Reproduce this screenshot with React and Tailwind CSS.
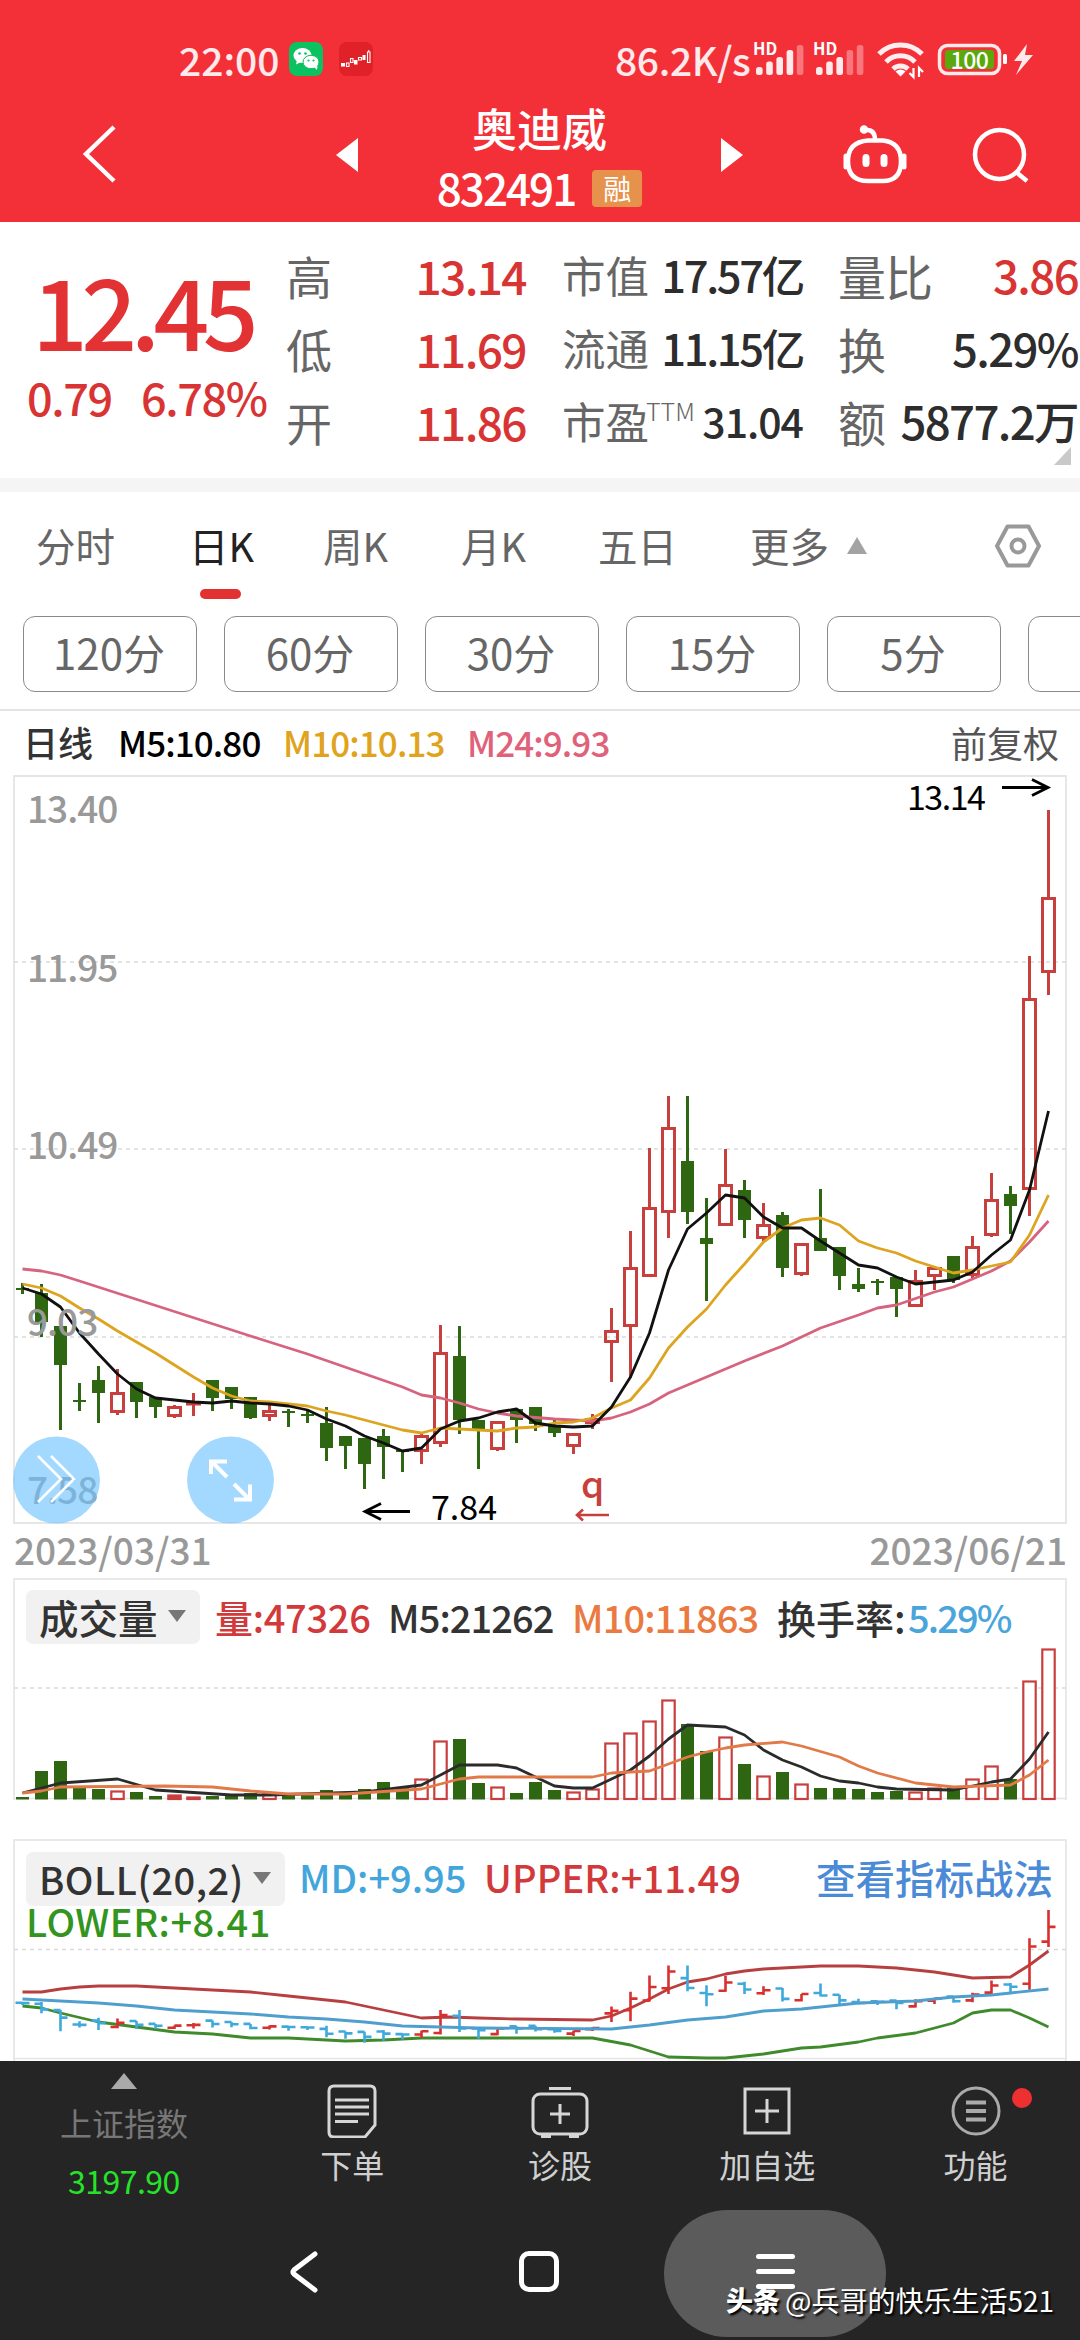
import React from 'react';

const CJK = 'font-["Noto_Sans_CJK_SC",sans-serif]';

const RED = '#c8403e';
const GREEN = '#2f6612';

// direction, high, low, body top, body bottom (chart units, top down)
const CANDLES = [
    ['d', 1283, 1294, 1288, 1290], ['d', 1284, 1337, 1293, 1322], ['d', 1326, 1430, 1326, 1365], ['d', 1383, 1411, 1400, 1402],
    ['d', 1366, 1423, 1380, 1393], ['u', 1369, 1415, 1392, 1413], ['d', 1382, 1418, 1382, 1402], ['d', 1397, 1418, 1397, 1407],
    ['u', 1405, 1418, 1406, 1417], ['u', 1393, 1416, 1402, 1404], ['d', 1380, 1411, 1380, 1398], ['d', 1387, 1409, 1387, 1399],
    ['d', 1397, 1419, 1397, 1418], ['u', 1405, 1421, 1410, 1417], ['d', 1409, 1427, 1411, 1413], ['d', 1410, 1423, 1414, 1416],
    ['d', 1407, 1461, 1423, 1448], ['d', 1436, 1469, 1436, 1446], ['d', 1438, 1489, 1438, 1464], ['d', 1429, 1479, 1436, 1447],
    ['d', 1450, 1472, 1450, 1452], ['u', 1433, 1464, 1435, 1452], ['u', 1325, 1447, 1352, 1444], ['d', 1326, 1434, 1356, 1420],
    ['d', 1420, 1469, 1420, 1430], ['u', 1421, 1451, 1421, 1450], ['d', 1409, 1443, 1409, 1420], ['d', 1407, 1431, 1407, 1424],
    ['d', 1420, 1437, 1425, 1433], ['u', 1433, 1454, 1433, 1447], ['u', 1414, 1429, 1418, 1424], ['u', 1308, 1382, 1330, 1343],
    ['u', 1231, 1378, 1267, 1327], ['u', 1148, 1277, 1207, 1277], ['u', 1096, 1238, 1127, 1213], ['d', 1096, 1224, 1161, 1212],
    ['d', 1198, 1301, 1238, 1244], ['u', 1149, 1226, 1184, 1226], ['d', 1180, 1238, 1190, 1220], ['u', 1203, 1243, 1224, 1239],
    ['d', 1212, 1277, 1215, 1268], ['u', 1243, 1276, 1243, 1275], ['d', 1189, 1251, 1238, 1251], ['d', 1247, 1290, 1247, 1276],
    ['d', 1268, 1292, 1284, 1289], ['d', 1279, 1295, 1281, 1283], ['d', 1277, 1317, 1277, 1289], ['u', 1270, 1307, 1280, 1307],
    ['u', 1266, 1290, 1267, 1277], ['d', 1256, 1283, 1256, 1280], ['u', 1236, 1280, 1246, 1276], ['u', 1173, 1237, 1199, 1236],
    ['d', 1186, 1234, 1194, 1206], ['u', 956, 1216, 998, 1190], ['u', 810, 995, 897, 973],
];

const VOLUME = [
    1797, 1771, 1761, 1788, 1789, 1791, 1792, 1796, 1795, 1797, 1796, 1795, 1793, 1793, 1793, 1795, 1790, 1792, 1789,
    1782, 1788, 1779, 1741, 1739, 1783, 1787, 1793, 1782, 1790, 1792, 1789, 1743, 1733, 1721, 1700, 1724, 1751, 1737,
    1764, 1776, 1772, 1784, 1788, 1788, 1789, 1792, 1791, 1792, 1788, 1788, 1779, 1766, 1779, 1681, 1649,
];

const MA5 = [
    1288, 1294, 1307, 1333, 1354, 1374, 1389, 1398, 1400, 1402, 1403, 1401, 1403, 1404, 1406, 1410, 1419, 1426, 1436,
    1443, 1451, 1448, 1429, 1421, 1418, 1412, 1409, 1423, 1426, 1427, 1426, 1407, 1377, 1333, 1270, 1229, 1213, 1195,
    1198, 1217, 1228, 1228, 1241, 1253, 1265, 1268, 1277, 1284, 1282, 1280, 1272, 1255, 1240, 1190, 1111,
].map((y, i) => [i, y]);

const MA10 = [
    1284, 1288, 1296, 1308, 1319, 1331, 1342, 1353, 1365, 1377, 1388, 1396, 1401, 1402, 1404, 1406, 1411, 1415, 1420,
    1425, 1430, 1433, 1428, 1429, 1430, 1431, 1428, 1427, 1423, 1422, 1418, 1408, 1400, 1378, 1348, 1327, 1309, 1285,
    1264, 1242, 1228, 1220, 1218, 1225, 1241, 1248, 1253, 1261, 1267, 1273, 1270, 1266, 1262, 1235, 1195,
].map((y, i) => [i, y]);

const MA24 = [
    [0, 1269], [1, 1271], [2, 1275], [3, 1281], [12, 1336], [15, 1354], [20, 1387], [21, 1395], [22, 1398], [23, 1403],
    [24, 1409], [25, 1413], [26, 1416], [28, 1419], [30, 1421], [31, 1418], [32, 1412], [33, 1404], [34, 1393], [36, 1377],
    [38, 1361], [40, 1346], [42, 1328], [44, 1315], [45, 1308], [46, 1305], [48, 1292], [49, 1287], [50, 1279], [51, 1271],
    [52, 1261], [53, 1242], [54, 1221],
];

const VOL_MA5 = [
    [0, 1793], [1, 1788], [2, 1783], [5, 1779], [7, 1790], [11, 1795], [13, 1795], [18, 1792], [21, 1785], [23, 1765],
    [25, 1765], [26, 1768], [28, 1786], [29, 1788], [30, 1788], [31, 1779], [32, 1770], [33, 1756], [34, 1739], [35, 1725],
    [37, 1727], [38, 1735], [39, 1750], [40, 1760], [41, 1767], [42, 1776], [43, 1781], [44, 1783], [45, 1787], [46, 1789],
    [49, 1790], [51, 1782], [52, 1779], [53, 1759], [54, 1732],
];

const VOL_MA10 = [
    [0, 1793], [1, 1791], [2, 1787], [7.5, 1786], [10, 1787], [12, 1791], [14, 1794], [17, 1794], [21, 1789], [22, 1784],
    [23, 1779], [24, 1777], [30, 1777], [31, 1773], [33, 1771], [34, 1764], [35, 1757], [36, 1752], [37, 1748], [38, 1745],
    [40, 1742], [41, 1746], [43, 1757], [44, 1766], [45, 1773], [47, 1783], [49, 1787], [52, 1785], [53, 1775], [54, 1760],
];

const UPPER = [
    [0, 1992], [1, 1992], [2, 1989], [3, 1987], [4, 1986], [6, 1986], [8, 1988], [12, 1992], [14, 1996], [17, 2002],
    [19, 2010], [21, 2018], [22.5, 2017], [24, 2018], [26, 2019], [30, 2020], [31, 2016], [32, 2008], [33, 1999], [34, 1989],
    [35, 1982], [36, 1979], [37, 1974], [38, 1971], [39, 1969], [42, 1966], [44, 1966], [46, 1968], [48, 1972], [50, 1978],
    [52, 1977], [53, 1965], [54, 1951],
];

const MIDDLE = [
    [0, 1999], [2, 2001], [4, 2003], [6, 2006], [8, 2010], [10, 2012], [12, 2014], [14, 2017], [16, 2019], [18, 2022],
    [20, 2026], [22, 2027], [24, 2028], [31, 2029], [33, 2025], [35, 2020], [37, 2017], [39, 2011], [41, 2009], [44, 2003],
    [47, 2001], [49, 1997], [51, 1995], [52, 1993], [54, 1989],
];

const LOWER = [
    [0, 2006], [1, 2008], [2, 2013], [4, 2022], [6, 2027], [8, 2032], [10, 2034], [12, 2038], [14, 2038], [17, 2041],
    [19, 2040], [21, 2038], [23, 2038], [30, 2038], [32, 2045], [33, 2051], [34, 2057], [36, 2058], [37, 2058], [39, 2054],
    [41, 2048], [42, 2047], [44, 2042], [45, 2038], [47, 2033], [49, 2023], [50, 2013], [51, 2010], [52, 2010], [53, 2018],
    [54, 2027],
];

const xAt = (i) => 22.5 + i * 19;

function Line({ data, color, width = 2.8 }) {
    return <polyline points={data.map(([i, y]) => `${xAt(i)},${y}`).join(' ')} fill="none" stroke={color} strokeWidth={width} strokeLinejoin="round" />;
}

function Grid({ ys }) {
    return ys.map((y) => <path key={y} d={`M14 ${y}H1066`} stroke="#dadada" strokeWidth="1.3" strokeDasharray="4 4" />);
}

function Candle({ i, c }) {
    const [dir, high, low, top, bottom] = c;
    const x = xAt(i);
    if (dir === 'd') {
        return (
            <g fill={GREEN}>
                <rect x={x - 1.5} y={high} width="3" height={low - high} />
                <rect x={x - 6.5} y={top} width="13" height={bottom - top} />
            </g>
        );
    }
    return (
        <g stroke={RED} strokeWidth="3" fill="none">
            <path d={`M${x} ${high}V${top}M${x} ${bottom}V${low}`} />
            <rect x={x - 6} y={top + 1.5} width="12" height={Math.max(bottom - top - 3, 0.5)} />
        </g>
    );
}

function PriceChart() {
    const labels = [['13.40', 809], ['11.95', 968], ['10.49', 1145], ['9.03', 1322], ['7.58', 1490]];
    return (
        <svg className="block h-[754px] w-full overflow-visible" viewBox="0 772 1080 754">
            <rect x="14" y="776" width="1052" height="747" fill="none" stroke="#e6e6e6" strokeWidth="2" />
            <Grid ys={[962, 1149, 1337]} />
            {CANDLES.map((c, i) => <Candle key={i} i={i} c={c} />)}
            <Line data={MA24} color="#d7647e" />
            <Line data={MA10} color="#dda420" />
            <Line data={MA5} color="#111" />
            <g fill="#999" fontSize="37" fontWeight="500">
                {labels.map(([t, y]) => <text key={t} x="27" y={y + 13.5} letterSpacing="-1">{t}</text>)}
            </g>
            <g fill="#000" fontSize="34">
                <text x="431" y="1520">7.84</text>
                <text x="907" y="810" letterSpacing="-1.5">13.14</text>
            </g>
            <g fill="none" stroke="#000" strokeWidth="2.8">
                <path d="M410 1511.5H365M381 1503.5l-16 8 16 8" />
                <path d="M1002 787.5h46M1032 779.5l16 8-16 8" />
            </g>
            <text x="581" y="1498" fill={RED} fontSize="37" fontWeight="500">q</text>
            <path d="M609 1515h-32M583 1509.5l-6 5.5 6 5.5" fill="none" stroke={RED} strokeWidth="2.6" />
            <g fill="#6fc3ff" fillOpacity="0.63">
                <circle cx="56.5" cy="1480" r="43.5" />
                <circle cx="230.5" cy="1480" r="43.5" />
            </g>
            <g fill="none" stroke="#fff" strokeWidth="2.6">
                <path d="M38 1456l23 23-23 23M51 1456l23 23-23 23" />
                <path strokeWidth="4" d="M227 1477l-15-15M211 1474v-12.5h16M234 1484l15 15M234 1499.500h16v-15" />
            </g>
        </svg>
    );
}

function VolumeChart() {
    return (
        <svg className="block h-[154px] w-full" viewBox="0 1647 1080 154">
            <Grid ys={[1688]} />
            <path d="M14 1798.5H1066" stroke="#e6e6e6" strokeWidth="1.5" />
            {VOLUME.map((y, i) => (
                CANDLES[i][0] === 'u'
                    ? <rect key={i} x={xAt(i) - 6.2} y={y + 0.5} width="12.4" height={Math.max(1798.5 - y, 1)} fill={y > 1793 ? RED : '#fff'} stroke={RED} strokeWidth="2.2" />
                    : <rect key={i} x={xAt(i) - 6.5} y={y} width="13" height={1799.5 - y} fill={GREEN} />
            ))}
            <Line data={VOL_MA5} color="#2b2b2b" />
            <Line data={VOL_MA10} color="#e17a48" />
        </svg>
    );
}

function BollChart() {
    // price axis squeezed into the indicator pane
    const s = (y) => 1910 + (y - 810) * 0.194;
    return (
        <svg className="block h-[154px] w-full" viewBox="0 1906 1080 154">
            <Grid ys={[1949.5]} />
            <path d="M14 2058.5H1066" stroke="#e6e6e6" strokeWidth="1.5" />
            <Line data={UPPER} color="#b83f3f" />
            <Line data={LOWER} color="#3f8a2b" />
            {CANDLES.map(([dir, high, low, top, bottom], i) => {
                const x = xAt(i);
                const open = s(dir === 'u' ? bottom : top);
                const close = s(dir === 'u' ? top : bottom);
                return <path key={i} d={`M${x} ${s(high)}V${s(low) + 1}M${x - 7} ${open}H${x}M${x} ${close}H${x + 7}`} fill="none" stroke={dir === 'u' ? '#d8302f' : '#3fa9de'} strokeWidth="2.6" />;
            })}
            <Line data={MIDDLE} color="#4f9fce" />
        </svg>
    );
}

function Signal({ x, lit }) {
    const tops = [67, 61.5, 57, 50, 45];
    return tops.map((y, n) => (
        <rect key={n} x={x + n * 10.2} y={y} width="6.6" height={75 - y} rx="2.5" fill="#fff" fillOpacity={n < lit ? 0.9 : 0.35} />
    ));
}

function StatusBar() {
    return (
        <div className="flex h-[118px] items-center text-[39px] font-medium leading-none text-white/90">
            <span className="ml-[179px] w-[110px]">22:00</span>
            <svg className="h-[34px] w-[34px]" viewBox="0 0 34 34">
                <rect width="34" height="34" rx="8" fill="#0bc160" />
                <ellipse cx="13.5" cy="13.5" rx="9" ry="7.5" fill="#fff" />
                <path d="M8 18l-1 4.5 5-2.5z" fill="#fff" />
                <ellipse cx="22" cy="20" rx="8" ry="6.7" fill="#fff" stroke="#0bc160" strokeWidth="1" />
                <path d="M25 25l3 3 .5-4.5z" fill="#fff" />
                <g fill="#0bc160"><circle cx="10.5" cy="11.500" r="1.3" /><circle cx="16.5" cy="11.5" r="1.3" /><circle cx="19.5" cy="18.5" r="1.1" /><circle cx="24.5" cy="18.5" r="1.1" /></g>
            </svg>
            <svg className="ml-[16px] h-[34px] w-[34px]" viewBox="0 0 34 34">
                <rect width="34" height="34" rx="8" fill="#e02228" />
                <g fill="#fff"><rect x="2" y="21" width="4" height="3.5" /><rect x="15" y="18" width="3.5" height="4.5" /><rect x="23.500" y="13" width="3" height="5" /></g>
                <path d="M7.5 21h2.500v3.500h-2.500zM11.500 16.500h2.500v4h-2.500zM19.500 15.500h3v2.500h-3zM28.500 10h2.500v10.500h-2.500zM29.700 8v2" fill="none" stroke="#fff" strokeWidth="1.1" />
            </svg>
            <span className="ml-[242px] w-[138px] tracking-[-0.4px]">86.2K/s</span>
            <svg className="h-[52px] w-[290px]" viewBox="752 33 290 52">
                <g fill="#fff" fontSize="16.500" fontWeight="700"><text x="752" y="55">HD</text><text x="812" y="55">HD</text></g>
                <Signal x={755} lit={4} />
                <Signal x={815} lit={3} />
                <g fill="none" stroke="#fff" strokeOpacity="0.92" strokeWidth="5">
                    <path d="M878 54a30 30 0 0 1 43 0M885 62a20 20 0 0 1 29 0M892 69a11 11 0 0 1 15 0" />
                </g>
                <path d="M894.500 71.500q5-4 10 0l-5 5z" fill="#fff" />
                <path d="M912.500 68v9l-4-4M918 77v-9l4 4" fill="none" stroke="#fff" strokeWidth="2.200" />
                <rect x="938.500" y="45.500" width="60" height="28" rx="8" fill="none" stroke="#fff" strokeOpacity="0.9" strokeWidth="3.500" />
                <rect x="944" y="50" width="49" height="19" rx="3" fill="#5aa80c" />
                <text x="968.500" y="68.500" textAnchor="middle" fill="#fff" fontSize="23" fontWeight="500" letterSpacing="-0.5">100</text>
                <rect x="1002" y="54" width="4" height="10" rx="1.500" fill="#fff" />
                <path d="M1026 44l-13 17h8l-6 14 17-20h-8z" fill="#fff" fillOpacity="0.9" />
            </svg>
        </div>
    );
}

function Header() {
    return (
        <div className="h-[222px] bg-[#f32f38] text-white">
            <StatusBar />
            <div className="flex h-[104px] items-start">
                <svg className="ml-[80px] mt-[5px] h-[62px] w-[40px]" viewBox="0 0 40 62"><path d="M34 4L6 31l28 27" fill="none" stroke="#fff" strokeWidth="4.500" /></svg>
                <svg className="ml-[216px] mt-[20px] h-[34px] w-[22px]" viewBox="0 0 22 34"><path d="M0 17L22 0v34z" fill="#fff" /></svg>
                <div className="flex w-[363px] flex-col items-center font-medium">
                    <span className="mt-[-14px] text-[45px] leading-[48px]">奥迪威</span>
                    <div className="mt-[12px] flex items-center">
                        <span className="text-[44px] leading-[46px] tracking-[-2px]">832491</span>
                        <span className="ml-[17px] mt-[2px] flex h-[37px] w-[50px] items-center justify-center rounded-[4px] bg-[#e6914c] text-[28px] font-normal leading-none">融</span>
                    </div>
                </div>
                <svg className="mt-[20px] h-[34px] w-[22px]" viewBox="0 0 22 34"><path d="M22 17L0 0v34z" fill="#fff" /></svg>
                <svg className="ml-[98px] mt-[6px] h-[62px] w-[68px]" viewBox="841 124 68 62" fill="none" stroke="#fff" strokeWidth="4.500">
                    <path d="M868 140.500h15q18 2 18 20.500 0 20-18 20h-15q-20 0-20-20 0-19 20-20.500z" />
                    <path d="M875 140c0-6-2-10-8-10" strokeLinecap="round" />
                    <circle cx="864" cy="129.500" r="2" />
                    <path d="M846 156v11M904 156v11" strokeWidth="5" strokeLinecap="round" />
                    <path d="M866 157.500v6M884 157.500v6" strokeWidth="7" strokeLinecap="round" />
                </svg>
                <svg className="ml-[60px] mt-[6px] h-[62px] w-[62px]" viewBox="969 124 62 62" fill="none" stroke="#fff" strokeWidth="4.500"><circle cx="999.500" cy="154.500" r="24.500" /><path d="M1016 172l11 9" /></svg>
            </div>
        </div>
    );
}

function QuoteRow({ left, mid, right }) {
    return (
        <div className="flex h-[73px] items-center whitespace-nowrap leading-none">
            <span className="w-[90px] text-[46px] text-[#666]">{left[0]}</span>
            <span className="w-[150px] text-right text-[46px] font-medium tracking-[-1.6px] text-[#d93434]">{left[1]}</span>
            <div className="ml-[36px] flex w-[241px] items-center justify-between">
                <span className="relative text-[43.5px] text-[#666]">
                    {mid[0]}
                    {mid[2] && <span className="absolute left-[84px] top-[-1px] text-[25px] font-light">{mid[2]}</span>}
                </span>
                <span className={`font-medium text-[#2d2d2d] ${mid[2] ? 'text-[41px] tracking-[-1px]' : 'text-[43.500px] tracking-[-2.3px]'}`}>{mid[1]}</span>
            </div>
            <div className="ml-[35px] flex w-[240px] items-center justify-between">
                <span className="text-[48px] tracking-[-1px] text-[#666]">{right[0]}</span>
                <span className={`text-[45.500px] font-medium tracking-[-1.6px] ${right[2] || 'text-[#2d2d2d]'}`}>{right[1]}</span>
            </div>
        </div>
    );
}

function Quote() {
    return (
        <div className="relative flex h-[256px] bg-white">
            <div className="w-[286px] font-medium text-[#e33233]">
                <div className="mt-[44px] pl-[32px] text-[98px] leading-[84px] tracking-[-6.500px]">12.45</div>
                <div className="mt-[24px] flex text-[45px] leading-none tracking-[-1.4px] text-[#d93434]">
                    <span className="ml-[27px] w-[114px]">0.79</span>
                    <span>6.78%</span>
                </div>
            </div>
            <div className="pt-[16px]">
                <QuoteRow left={['高', '13.14']} mid={['市值', '17.57亿']} right={['量比', '3.86', 'text-[#d93434]']} />
                <QuoteRow left={['低', '11.69']} mid={['流通', '11.15亿']} right={['换', '5.29%']} />
                <QuoteRow left={['开', '11.86']} mid={['市盈', '31.04', 'TTM']} right={['额', '5877.2万']} />
            </div>
            <svg className="absolute right-[9px] top-[225px] h-[18px] w-[17px]" viewBox="0 0 17 18"><path d="M17 0v18H0z" fill="#c9c9c9" /></svg>
        </div>
    );
}

function PeriodTabs() {
    const tabs = [['分时', 'w-[153px]'], ['日K', 'w-[134px]'], ['周K', 'w-[138px]'], ['月K', 'w-[137px]'], ['五日', 'w-[152px]'], ['更多', 'w-[97px]']];
    return (
        <div className="flex h-[124px] pl-[36px] pt-[32px]">
            {tabs.map(([label, w]) => (
                <div key={label} className={`${w} text-[39.500px] leading-[42px] ${label === '日K' ? 'text-[#222]' : 'text-[#666]'}`}>
                    {label}
                    {label === '日K' && <div className="ml-[11px] mt-[23px] h-[10px] w-[41px] rounded-full bg-[#e33030]"></div>}
                </div>
            ))}
            <svg className="mt-[13px] h-[17px] w-[20px]" viewBox="0 0 20 17"><path d="M10 0l10 17H0z" fill="#a3a3a3" /></svg>
            <svg className="ml-[128px] h-[44px] w-[46px]" viewBox="0 0 46 44" fill="none" stroke="#999" strokeWidth="4">
                <path d="M12.500 2.500h21L44 22 33.500 41.500h-21L2 22z" strokeLinejoin="round" />
                <circle cx="23" cy="22" r="6.500" />
            </svg>
        </div>
    );
}

function MinuteChips() {
    return (
        <div className="flex h-[95px] gap-[27px] overflow-hidden border-b-2 border-[#e4e4e4] pl-[23px]">
            {['120分', '60分', '30分', '15分', '5分', ''].map((t) => (
                <div key={t} className="flex h-[76px] w-[174px] shrink-0 items-center justify-center rounded-[12px] border-[1.500px] border-[#8a8a8a] pb-[4px] pr-[2px] text-[42px] leading-none text-[#666]">{t}</div>
            ))}
        </div>
    );
}

function Dropdown({ label, className }) {
    return (
        <div className={`flex h-[54px] items-center justify-between rounded-[7px] bg-[#f1f1f1] pl-[13px] pr-[14px] font-medium text-[#333] ${className}`}>
            <span>{label}</span>
            <svg className="mt-[-2px] h-[12px] w-[18px]" viewBox="0 0 18 12"><path d="M0 0h18L9 12z" fill="#777" /></svg>
        </div>
    );
}

function TabIcon({ name }) {
    const common = { fill: 'none', stroke: '#d6d6d6', strokeWidth: 3 };
    if (name === 'order') return <svg className="h-[56px] w-[50px]" viewBox="0 0 50 56" {...common}><path d="M7 4h36q5 0 5 5v34L38 55H7q-5 0-5-5V9q0-5 5-5zM8 18h34M8 25h34M8 32h34M8 39.500h23" /></svg>;
    if (name === 'diagnose') return <svg className="h-[56px] w-[58px]" viewBox="0 0 58 56" {...common}><rect x="2" y="12" width="54" height="40" rx="7" /><path d="M18 6.500h22M29 22v20M19 32h20" /><path strokeWidth="4" d="M10 54h10M38 54h10" /></svg>;
    if (name === 'add') return <svg className="h-[56px] w-[50px]" viewBox="0 0 50 56" {...common}><path d="M3 7h44v44H3zM25 17v24M13 29h24" /></svg>;
    return <svg className="h-[56px] w-[50px]" viewBox="0 0 50 56" {...common} stroke="#aaa"><circle cx="25" cy="29" r="23" /><path strokeWidth="4" d="M15 20.500h20M15 29h20M15 37.500h20" /></svg>;
}

function BottomBar() {
    const items = [['order', '下单', 'w-[209px]'], ['diagnose', '诊股', 'w-[207px]'], ['add', '加自选', 'w-[208px]'], ['more', '功能', 'w-[209px]']];
    return (
        <div className="flex h-[149px] leading-none">
            <div className="flex w-[248px] flex-col items-center">
                <svg className="mt-[12px] h-[16px] w-[26px]" viewBox="0 0 26 16"><path d="M13 0l13 16H0z" fill="#aaa" /></svg>
                <span className="mt-[17px] text-[32px] text-[#777]">上证指数</span>
                <span className="mt-[26px] text-[32px] tracking-[-0.500px] text-[#26e32a]">3197.90</span>
            </div>
            {items.map(([icon, label, w]) => (
                <div key={icon} className={`relative flex flex-col items-center pt-[21px] ${w}`}>
                    <TabIcon name={icon} />
                    <span className="mt-[10px] text-[32px] text-[#d0d0d0]">{label}</span>
                    {icon === 'more' && <span className="absolute left-[141px] top-[27px] h-[20px] w-[20px] rounded-full bg-[#ee3030]"></span>}
                </div>
            ))}
        </div>
    );
}

function SystemNav() {
    return (
        <div className="relative flex h-[130px] items-start">
            <svg className="ml-[288px] mt-[40px] h-[44px] w-[32px]" viewBox="0 0 32 44"><path d="M27 4L6 20q-2 2 0 4l21 16" fill="none" stroke="#fff" strokeWidth="5" strokeLinecap="round" /></svg>
            <div className="ml-[199px] mt-[41px] h-[41px] w-[40px] rounded-[10px] border-[5px] border-white"></div>
            <div className="ml-[105px] flex h-[127px] w-[222px] flex-col items-center rounded-[64px] bg-[#5b5b5b] pt-[44px]">
                <div className="mb-[10px] h-[5px] w-[39px] rounded-full bg-white"></div>
                <div className="mb-[10px] h-[5px] w-[39px] rounded-full bg-white"></div>
                <div className="h-[5px] w-[39px] rounded-full bg-white"></div>
            </div>
            <div className="absolute left-[726px] top-[75px] flex whitespace-nowrap text-[28px] leading-[30px] text-white [text-shadow:2px_2px_2px_#000]">
                <span className="w-[59px] text-[27px] font-black">头条</span>
                <span>@兵哥的快乐生活521</span>
            </div>
        </div>
    );
}

export default function App() {
    return (
        <div className={`h-[2340px] w-[1080px] overflow-hidden bg-white ${CJK}`}>
            <Header />
            <Quote />
            <div className="h-[14px] bg-[#f5f5f5]"></div>
            <PeriodTabs />
            <MinuteChips />
            <div className="flex h-[61px] items-center whitespace-nowrap pl-[23px] text-[35px] font-medium leading-none tracking-[-0.9px]">
                <span className="w-[95px] tracking-normal text-[#333]">日线</span>
                <span className="w-[165px] text-black">M5:10.80</span>
                <span className="w-[184px] text-[#dfa31c]">M10:10.13</span>
                <span className="text-[#e0627a]">M24:9.93</span>
                <span className="ml-auto mr-[21px] text-[36px] font-normal tracking-normal text-[#555]">前复权</span>
            </div>
            <PriceChart />
            <div className="flex h-[52px] items-center justify-between pb-[5px] pl-[14px] pr-[13px] text-[37px] font-medium leading-none text-[#999]">
                <span>2023/03/31</span>
                <span>2023/06/21</span>
            </div>
            <div className="mx-[13px] h-[222px] border-2 border-b-0 border-[#e9e9e9]">
                <div className="flex h-[67px] items-center whitespace-nowrap pl-[11px] pt-[7px] text-[38px] font-medium leading-none">
                    <Dropdown label="成交量" className="mr-[15px] w-[174px] text-[39.500px]" />
                    <span className="w-[173px] tracking-[-0.3px] text-[#d2393a]">量:47326</span>
                    <span className="w-[184px] tracking-[-0.9px] text-[#333]">M5:21262</span>
                    <span className="w-[205px] tracking-[-0.9px] text-[#ea7a42]">M10:11863</span>
                    <span className="w-[131px] text-[39px] text-[#333]">换手率:</span>
                    <span className="tracking-[-1.9px] text-[#4aa5db]">5.29%</span>
                </div>
                <div className="mx-[-15px]"><VolumeChart /></div>
            </div>
            <div className="mx-[13px] mt-[39px] h-[222px] border-2 border-b-0 border-[#e9e9e9]">
                <div className="flex h-[64px] items-center whitespace-nowrap pl-[11px] text-[38px] font-medium leading-none">
                    <Dropdown label="BOLL(20,2)" className="mr-[14px] mt-[12px] w-[259px] tracking-[0.5px]" />
                    <span className="mt-[7px] w-[185px] text-[#42a5dc]">MD:+9.95</span>
                    <span className="mt-[7px] tracking-[0.1px] text-[#d2393a]">UPPER:+11.49</span>
                    <span className="ml-auto mr-[12px] mt-[7px] text-[39.500px] text-[#4a8ad6]">查看指标战法</span>
                </div>
                <div className="relative z-10 h-[32px] pl-[11px] text-[38px] font-medium leading-[32px] tracking-[0.5px] text-[#339420]">LOWER:+8.41</div>
                <div className="mx-[-15px] mt-[-31px]"><BollChart /></div>
            </div>
            <div className="h-[279px] bg-[#252525]">
                <BottomBar />
                <SystemNav />
            </div>
        </div>
    );
}
